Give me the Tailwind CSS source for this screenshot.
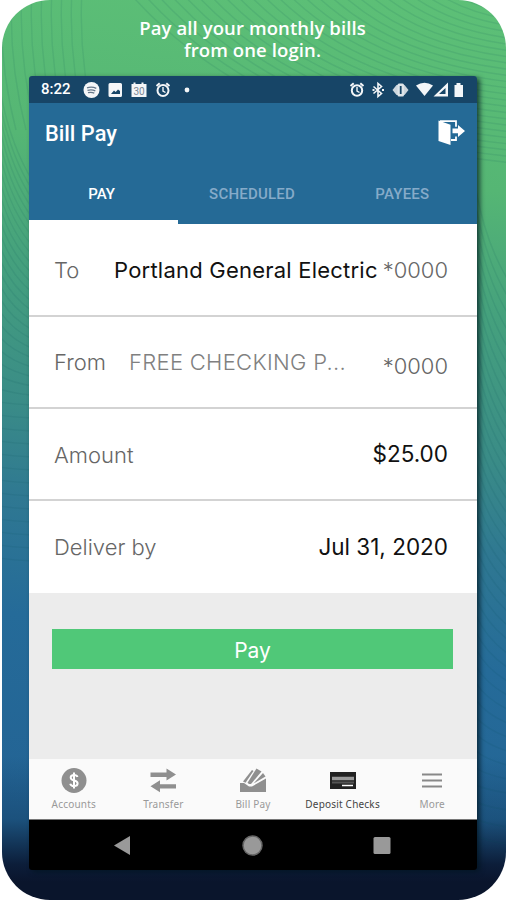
<!DOCTYPE html>
<html lang="en">

<head>
    <meta charset="UTF-8">
    <meta name="viewport" content="width=device-width, initial-scale=1.0">
    <title>Bill Pay</title>
    <script src="https://cdn.jsdelivr.net/npm/@tailwindcss/browser@4"></script>
</head>

<body class="bg-white overflow-hidden">
    <div class="relative ml-[2px] w-[504px] h-[900px] rounded-[48px] overflow-hidden bg-[linear-gradient(180deg,transparent_84%,#14406680_91%,#0c1e3a_96%,#0a152c_98%),linear-gradient(187deg,#5dc077_0%,#55b674_20%,#45a17d_33%,#3a8c87_48%,#2f7892_58%,#256b99_70%,#236394_90%)]">
        <!-- Wave lines -->
        <svg class="absolute inset-0" width="504" height="900" viewBox="0 0 504 900" fill="none" stroke="#0b4a55" stroke-opacity=".1" stroke-width="1.4">
            <g id="waves"></g>
        </svg>

        <div class="relative flex flex-col h-full pl-[27px] pr-[27px]">
            <h1 class="h-[76px] pt-[17px] pr-[3px] text-center text-white font-['Open_Sans',sans-serif] font-semibold text-[18.5px] leading-[22px] tracking-[0.1px]">Pay all your monthly bills<br>from one login.</h1>

            <!-- Phone -->
            <div class="flex flex-col w-[448px] h-[794px] rounded-[3px] overflow-hidden shadow-[3px_2px_5px_rgba(0,20,30,0.7)] font-[Roboto,sans-serif]">
                <!-- Status bar -->
                <div class="flex items-center h-[27px] bg-[#174567] pl-3 pr-3 text-white">
                    <span class="w-[42px] text-[15px] font-medium leading-none">8:22</span>
                    <svg width="108" height="18" viewBox="0 0 108 18" fill="#f4f6f8">
                        <circle cx="8.5" cy="9" r="8" />
                        <path d="M4 6.8q5-1.6 9.3.6M4.5 9.3q4.300-1.200 7.800.5M5 11.700q3.500-1 6.300.4" fill="none" stroke="#66788a" stroke-width="1.3" />
                        <path fill-rule="evenodd" d="M27 2h10.500q1.500 0 1.500 1.500v11q0 1.500-1.500 1.500H27q-1.500 0-1.500-1.500v-11Q25.500 2 27 2zM28 13h9v-3l-2-1.500-2.300 2.500-1.700-1.500z" />
                        <path d="M48.500 3h2V1.500h2V3h6V1.500h2V3h3v13h-15z" />
                        <text x="56" y="13.500" font-size="10" text-anchor="middle" fill="#7d8996">30</text>
                        <g fill="none" stroke="#f4f6f8" stroke-width="2">
                            <circle cx="80" cy="9.500" r="5.500" />
                            <path d="M73.500 5l3.200-2.800M86.500 5l-3.200-2.800" />
                            <path d="M80 6v4l2.500 1.500" stroke-width="1.400" />
                        </g>
                        <circle cx="104" cy="9" r="2.400" />
                    </svg>
                    <svg class="ml-auto" width="116" height="18" viewBox="0 0 116 18" fill="#f4f6f8">
                        <g fill="none" stroke="#f4f6f8">
                            <circle cx="8" cy="9.500" r="5.200" stroke-width="2" />
                            <path d="M1.500 5l3.200-2.800M14.500 5l-3.200-2.800" stroke-width="2" />
                            <path d="M8 6v4l2.500 1.500" stroke-width="1.400" />
                            <path d="M24.500 5.500l8 7L29 15.500v-13l3.500 3-8 7" stroke-width="1.600" />
                            <path d="M23.500 9h2M33 9h2" stroke-width="2" />
                        </g>
                        <path d="M43.500 9l4-5h8l4 5-4 5h-8z" fill="#cdd6dd" />
                        <rect x="48.500" y="2.500" width="6.500" height="13" rx="1.500" fill="#dfe5e9" />
                        <path d="M51.700 5v8" stroke="#174567" stroke-width="1.800" />
                        <path d="M67 4.500q8.500-5.500 17 0L75.500 15z" />
                        <path fill-rule="evenodd" d="M99 1.500v14H84.500zM96.500 7v6h-6.500z" />
                        <path d="M105.500 4h2V2h4v2h2.500v12h-8.500z" />
                    </svg>
                </div>

                <!-- Header -->
                <div class="h-[121px] bg-[#256a96] flex flex-col">
                    <div class="flex h-[60px] items-center justify-between pl-4 pr-3">
                        <h2 class="pt-[2px] text-white text-[21.800px] font-medium leading-none">Bill Pay</h2>
                        <svg width="28" height="26" viewBox="0 0 28 26" class="-mt-[3px]">
                            <path d="M3 2.200h16v5.500M19 17.500v3.500h-5" fill="none" stroke="#fff" stroke-width="1.800" />
                            <path d="M1.500 1.500l12 4.300V26l-12-4z" fill="#fff" />
                            <path d="M15.500 9.500h5.500V6l7 6-7 6v-3.800h-5.500z" fill="#fff" />
                        </svg>
                    </div>
                    <div class="grid grid-cols-3 flex-1 text-center text-[15px] leading-[21px] font-medium text-[#86abc9]">
                        <div class="border-b-[4px] border-white pt-[21px] pr-1 text-white">PAY</div>
                        <div class="pt-[21px] pr-[2px] tracking-[0.2px]">SCHEDULED</div>
                        <div class="pt-[21px] tracking-[0.2px]">PAYEES</div>
                    </div>
                </div>

                <!-- Payment form -->
                <div class="bg-white font-[Inter,sans-serif] text-[22px] leading-none text-[#666] divide-y-2 divide-[#d3d3d3]">
                    <div class="flex items-center h-[93px] pl-[25px] pr-[29px]">
                        <span class="w-[60px] font-light">To</span>
                        <span class="whitespace-nowrap text-[#111] tracking-[0.22px]">Portland General Electric</span>
                        <span class="ml-auto font-light">*0000</span>
                    </div>
                    <div class="flex items-center h-[92px] pl-[25px] pr-[29px]">
                        <span class="w-[75px] font-light">From</span>
                        <span class="whitespace-nowrap font-light text-[#808080] tracking-[0.3px]">FREE CHECKING P...</span>
                        <span class="ml-auto pt-2 font-light">*0000</span>
                    </div>
                    <div class="flex items-center justify-between h-[92px] pl-[25px] pr-[29px]">
                        <span class="pt-[2px] font-light">Amount</span>
                        <span class="text-[22.500px] text-[#111]">$25.00</span>
                    </div>
                    <div class="flex items-center justify-between h-[92px] pl-[25px] pr-[29px]">
                        <span class="font-light">Deliver by</span>
                        <span class="text-[22.500px] text-[#111]">Jul 31, 2020</span>
                    </div>
                </div>

                <div class="flex-1 bg-[#ececec] px-[23px] pt-9">
                    <button class="block w-[401px] h-[40px] pt-[2px] bg-[#50c878] text-white text-[21px] leading-none font-[Inter,sans-serif]">Pay</button>
                </div>

                <!-- Bottom tabs -->
                <div class="grid grid-cols-5 h-[60px] bg-[#fafafa] text-center font-['Noto_Sans',sans-serif] text-[10px] leading-[14px] tracking-[0.2px] text-[#999] whitespace-nowrap">
                    <div class="flex flex-col items-center pt-2 gap-[2px]">
                        <svg width="28" height="28" viewBox="0 0 28 28">
                            <circle cx="14" cy="13.500" r="12.500" fill="#8f8f8f" />
                            <path d="M17.500 10q-.7-2-3.500-2-3.300 0-3.300 2.600 0 2.200 3.300 2.800 3.600.6 3.600 3.100 0 2.600-3.600 2.600-3.100 0-3.800-2.400M14 5.500v16" fill="none" stroke="#fff" stroke-width="2" />
                        </svg>
                        <span>Accounts</span>
                    </div>
                    <div class="flex flex-col items-center pt-2 gap-[2px]">
                        <svg width="28" height="28" viewBox="0 0 28 28" fill="#8f8f8f">
                            <path d="M1.500 5.500h16V1.500L27 7.500l-9.500 6V10h-16zM27 17.300H11v-4L1.500 19.300l9.500 6v-3.800h16z" />
                        </svg>
                        <span>Transfer</span>
                    </div>
                    <div class="flex flex-col items-center pt-2 gap-[2px]">
                        <svg width="28" height="28" viewBox="0 0 28 28" fill="#8f8f8f">
                            <path d="M1 16h4l5 3.500h3l14-8V25H1z" />
                            <path d="M4 14.500L13 3l1.500 1L6.500 15.800z" />
                            <path d="M8.500 15.800L17.500 1.500l5 3L12 17h-2z" />
                            <path d="M14.500 16.500L24 6l2.500 3.500z" />
                        </svg>
                        <span>Bill Pay</span>
                    </div>
                    <div class="flex flex-col items-center pt-2 gap-[2px] text-[#444]">
                        <svg width="28" height="28" viewBox="0 0 28 28">
                            <rect x="1" y="5" width="26" height="17" fill="#222" />
                            <path d="M3 11.500h22" stroke="#999" stroke-width="3.500" />
                            <path d="M3 15.500h22" stroke="#555" stroke-width="2" />
                            <path d="M13 18.500h11" stroke="#fff" stroke-width="1.500" />
                        </svg>
                        <span>Deposit Checks</span>
                    </div>
                    <div class="flex flex-col items-center pt-2 gap-[2px]">
                        <svg width="28" height="28" viewBox="0 0 28 28" stroke="#888" stroke-width="2">
                            <path d="M4 7.500h20M4 13.500h20M4 19.500h20" />
                        </svg>
                        <span>More</span>
                    </div>
                </div>

                <!-- Android navigation -->
                <div class="h-[51px] bg-black border-t border-[#777] flex items-center">
                    <svg width="448" height="50" viewBox="0 0 448 50" fill="#999">
                        <path d="M85 25.500l16-9.500v19z" />
                        <circle cx="223.500" cy="25.500" r="9.500" stroke="#666" stroke-width="1.500" />
                        <rect x="344.500" y="17" width="17" height="17" rx="1.500" />
                    </svg>
                </div>
            </div>
        </div>
    </div>

    <script>
        let d = '';
        // arcs around the top right corner, kept above the phone
        for (let r = 60; r < 340; r += 10) {
            d += `M${530 - r * 1.3} -40 Q${530 - r * 0.9} ${r * 0.55 - 40} 530 ${r * 0.62 - 40}`;
        }
        // steep lines in the top left
        for (let x = -20; x < 90; x += 10) {
            d += `M${x} -10 Q${x - 4} 60 ${x + 14} 130`;
        }
        // left edge
        for (let y = 90; y < 560; y += 13) {
            const drop = Math.max(3, 90 - (y - 90) * 0.28);
            d += `M-2 ${y} Q8 ${y + drop * 0.6} 30 ${y + drop}`;
        }
        // right edge
        for (let y = 190; y < 840; y += 17) {
            const drop = Math.max(8, 90 - Math.max(0, y - 330) * 0.18);
            d += `M474 ${y} Q484 ${y + drop * 0.6} 506 ${y + drop}`;
        }
        document.getElementById('waves').innerHTML = `<path d="${d}"/>`;
    </script>
</body>

</html>
